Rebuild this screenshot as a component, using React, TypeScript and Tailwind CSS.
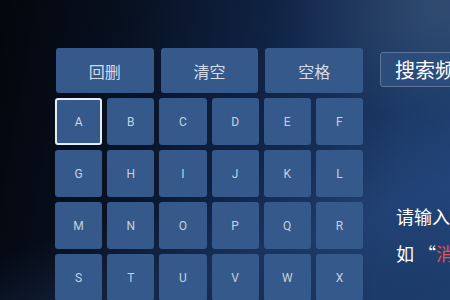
const actions = ['回删', '清空', '空格'];
const letters = 'ABCDEFGHIJKLMNOPQRSTUVWX'.split('');

export default function App() {
  return (
    <div
      className="relative w-[450px] h-[300px] overflow-hidden bg-[linear-gradient(100deg,#03060c_0%,#07101f_25%,#102345_55%,#1b3a68_85%,#1d3d6d_100%)]"
      style={{ fontFamily: '"Noto Sans CJK SC", "Noto Sans", sans-serif' }}
    >
      {/* light streak top right */}
      <div className="absolute inset-0 bg-[radial-gradient(ellipse_160px_110px_at_440px_10px,rgba(110,120,130,0.25),transparent)]" />
      <div className="absolute inset-0 bg-[linear-gradient(160deg,transparent_55%,rgba(60,100,170,0.2)_75%,transparent_95%)]" />

      <div className="relative flex pt-[48px] pl-[56px]">
        {/* keyboard */}
        <div className="flex flex-col w-[307px] shrink-0 gap-[5px]">
          <div className="flex gap-[7px] h-[45px]">
            {actions.map((a) => (
              <div
                key={a}
                className="flex-1 rounded-[3px] bg-[#35598a] flex items-center justify-center text-[16px] text-[#d4dce8]"
              >
                {a}
              </div>
            ))}
          </div>
          <div className="grid grid-cols-6 gap-[5px] -ml-[1px]">
            {letters.map((l) => (
              <div
                key={l}
                className={
                  l === 'A'
                    ? 'h-[47px] rounded-[3px] bg-[#35598a] border-2 border-[#e8edf3] flex items-center justify-center text-[12px] text-[#d0d9e6]'
                    : 'h-[47px] rounded-[3px] bg-[#35598a] flex items-center justify-center text-[12px] text-[#c6d1e0]'
                }
                style={{ fontFamily: 'Roboto, sans-serif' }}
              >
                {l}
              </div>
            ))}
          </div>
        </div>

        {/* right panel */}
        <div className="flex flex-col ml-[17px] pt-[4px] shrink-0">
          <div className="w-[120px] h-[35px] rounded-[3px] border border-[#5d7598] bg-[#2c4c7b] flex items-center pl-[14px] text-[20px] text-white whitespace-nowrap">
            搜索频道
          </div>
          <div className="mt-[111px] pl-[16px] text-[18px] leading-[37px] text-white whitespace-nowrap">
            <div>请输入片名首字母</div>
            <div>
              如 “<span className="text-[#ef4b4b]">消失的她</span>”
            </div>
          </div>
        </div>
      </div>
    </div>
  );
}
